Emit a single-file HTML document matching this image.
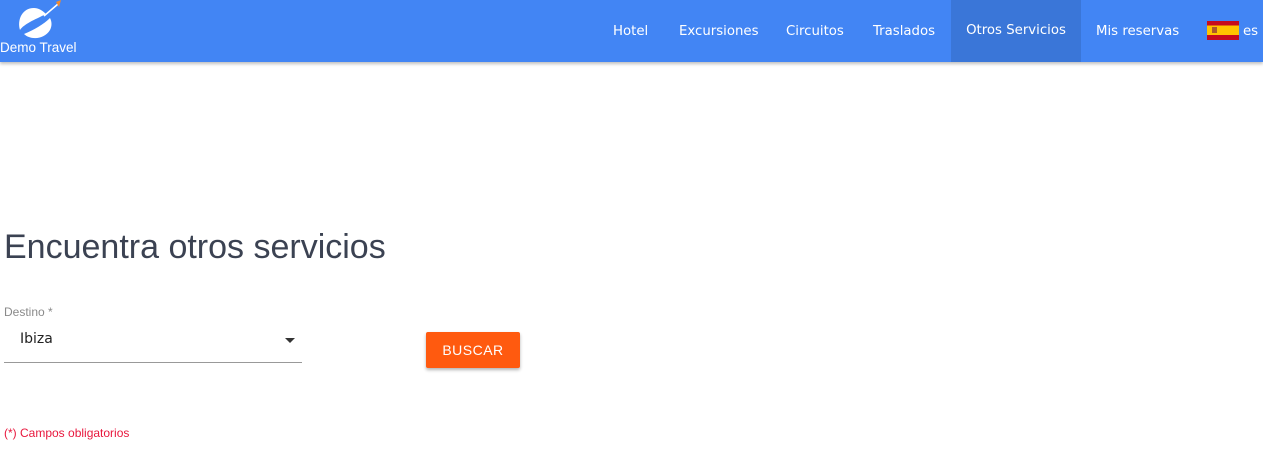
<!DOCTYPE html>
<html><head><meta charset="utf-8"><style>
body{margin:0;width:1263px;height:457px;background:#fff;font-family:"Liberation Sans",sans-serif;position:relative;overflow:hidden}
.nav{position:absolute;left:0;top:0;width:1263px;height:62px;background:#4285f4;box-shadow:0 2px 3px rgba(0,0,0,.25)}
.nav a{position:absolute;top:1px;height:61px;line-height:61px;color:#fff;font-family:"DejaVu Sans","Liberation Sans",sans-serif;font-size:13.3px}
.act{background:#3a76d8}
</style></head><body>
<div class="nav">
<svg style="position:absolute;left:14px;top:0" width="50" height="42" viewBox="0 0 50 42">
<path d="M20 8 C8 8 3 20 6 30 C10 24 20 20 32 14 C28 10 24 8 20 8Z" fill="#fff"/>
<path d="M36 18 C30 24 20 30 10 34 C16 40 30 40 36 30 C38 26 38 22 36 18Z" fill="#fff"/>
<path d="M30 16 L44 4" stroke="#fff" stroke-width="1.5"/>
<path d="M42 2 L47 0 L45 7Z" fill="#f08a30"/>
</svg>
<div style="position:absolute;left:0;top:40px;color:#fff;font-size:13.5px">Demo Travel</div>
<a style="left:613px">Hotel</a>
<a style="left:679px">Excursiones</a>
<a style="left:786px">Circuitos</a>
<a style="left:873px">Traslados</a>
<a class="act" style="left:951px;width:130px;top:0;height:62px;line-height:62px;text-align:center">Otros Servicios</a>
<a style="left:1096px">Mis reservas</a>
<div style="position:absolute;left:1207px;top:21px;width:32px;height:19px;background:linear-gradient(#c60b1e 0 25%,#ffc400 25% 75%,#c60b1e 75%)"></div>
<div style="position:absolute;left:1212px;top:27px;width:5px;height:6px;background:#ad5a2a"></div>
<a style="left:1243px">es</a>
</div>
<div style="position:absolute;left:4px;top:228px;font-size:34px;color:#3b4252">Encuentra otros servicios</div>
<div style="position:absolute;left:4px;top:305px;font-size:12px;color:#8a8a8a">Destino *</div>
<div style="position:absolute;left:20px;top:331px;color:#222;font-family:'DejaVu Sans','Liberation Sans',sans-serif;font-size:14px">Ibiza</div>
<div style="position:absolute;left:285px;top:338px;border-left:5px solid transparent;border-right:5px solid transparent;border-top:5px solid #333"></div>
<div style="position:absolute;left:4px;top:362px;width:298px;height:1px;background:#999"></div>
<div style="position:absolute;left:426px;top:332px;width:94px;height:36px;background:#ff5a0f;color:#fff;font-size:14px;line-height:36px;text-align:center;letter-spacing:.5px;box-shadow:0 2px 3px rgba(0,0,0,.3);border-radius:2px">BUSCAR</div>
<div style="position:absolute;left:4px;top:426px;font-size:12px;color:#e8173d">(*) Campos obligatorios</div>
</body></html>
